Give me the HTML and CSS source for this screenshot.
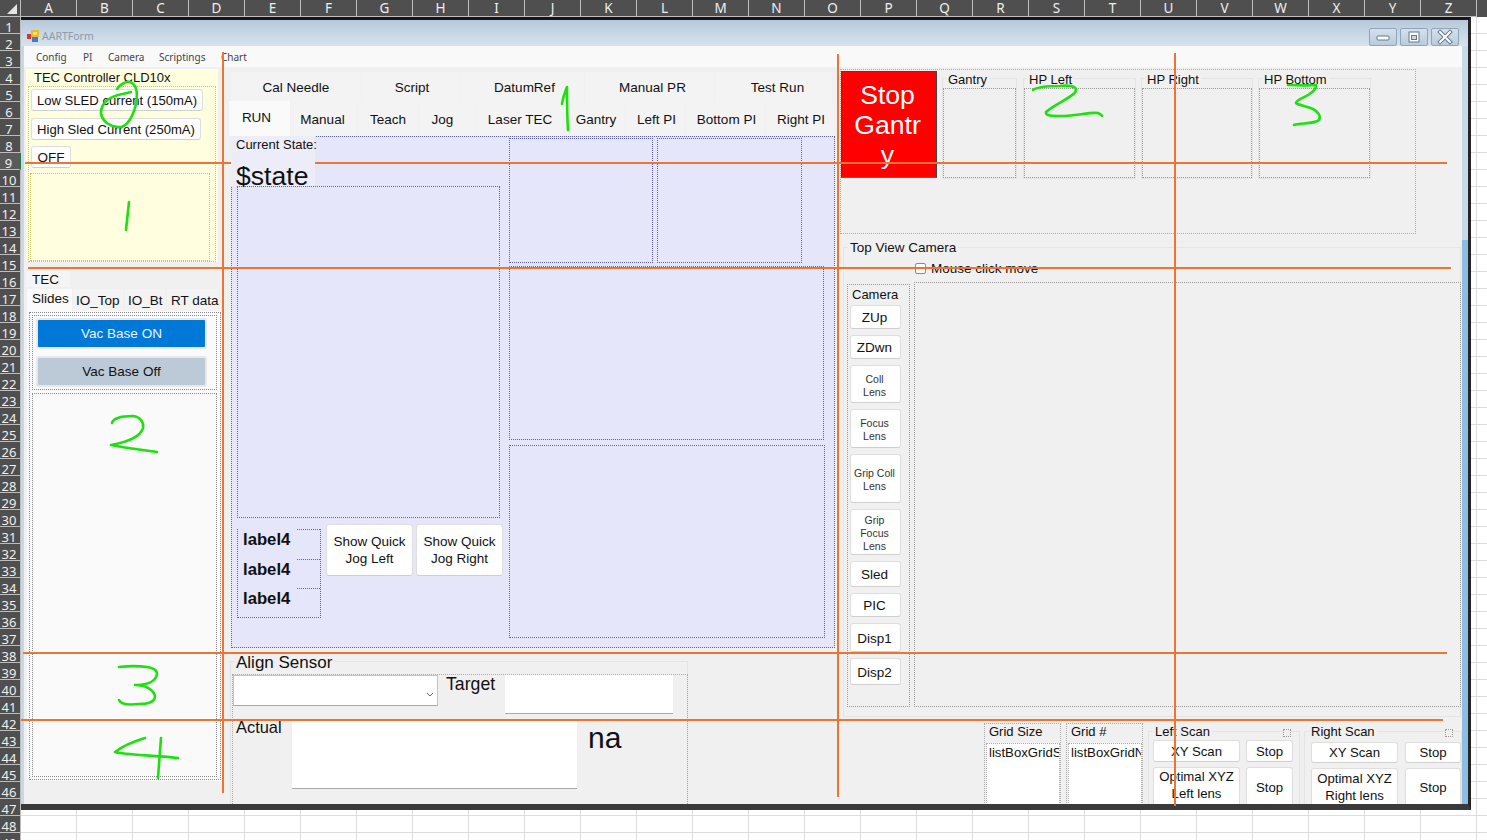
FILE: index.html
```html
<!DOCTYPE html>
<html lang="en">
<head>
<meta charset="utf-8">
<title>AARTForm</title>
<link rel="stylesheet" href="styles.css">
</head>
<body>
<div class="excel">
  <div class="corner"><span class="corner-tri"></span></div>
  <div class="col-heads">
    <div>A</div><div>B</div><div>C</div><div>D</div><div>E</div><div>F</div><div>G</div><div>H</div><div>I</div><div>J</div><div>K</div><div>L</div><div>M</div><div>N</div><div>O</div><div>P</div><div>Q</div><div>R</div><div>S</div><div>T</div><div>U</div><div>V</div><div>W</div><div>X</div><div>Y</div><div>Z</div>
  </div>
  <div class="row-heads">
    <div>1</div><div>2</div><div>3</div><div>4</div><div>5</div><div>6</div><div>7</div><div>8</div><div class="row-active">9</div><div>10</div><div>11</div><div>12</div><div>13</div><div>14</div><div>15</div><div>16</div><div>17</div><div>18</div><div>19</div><div>20</div><div>21</div><div>22</div><div>23</div><div>24</div><div>25</div><div>26</div><div>27</div><div>28</div><div>29</div><div>30</div><div>31</div><div>32</div><div>33</div><div>34</div><div>35</div><div>36</div><div>37</div><div>38</div><div>39</div><div>40</div><div>41</div><div>42</div><div>43</div><div>44</div><div>45</div><div>46</div><div>47</div><div>48</div><div>49</div>
  </div>
  <div class="sheet">
    <div class="window">
      <div class="titlebar">
        <svg class="app-icon" viewBox="0 0 12 12" width="12" height="12">
          <rect x="4" y="0" width="8" height="7" fill="#e9b93a"/>
          <rect x="0" y="4" width="4" height="5" fill="#d8352a"/>
          <rect x="5" y="7" width="6" height="5" fill="#4a78c8"/>
          <rect x="6" y="2" width="4" height="3" fill="#f7de6b"/>
        </svg>
        <span class="app-title">AARTForm</span>
        <div class="win-btns">
          <div class="win-btn"><svg viewBox="0 0 28 18" width="28" height="18"><rect x="8" y="8" width="12" height="4" rx="1" fill="#fff" stroke="#66788c"/></svg></div>
          <div class="win-btn"><svg viewBox="0 0 28 18" width="28" height="18"><rect x="9" y="4" width="10" height="10" fill="#fff" stroke="#66788c"/><rect x="11.5" y="7.5" width="5" height="4" fill="#c9d8e7" stroke="#66788c"/></svg></div>
          <div class="win-btn"><svg viewBox="0 0 28 18" width="28" height="18"><path d="M9 4l10 10M19 4L9 14" stroke="#66788c" stroke-width="4" stroke-linecap="square"/><path d="M9 4l10 10M19 4L9 14" stroke="#fff" stroke-width="2" stroke-linecap="square"/></svg></div>
        </div>
      </div>
      <div class="win-body">
        <div class="frame-l"></div>
        <div class="win-main">
          <div class="menu">
            <span class="m-config">Config</span><span class="m-pi">PI</span><span class="m-camera">Camera</span><span class="m-script">Scriptings</span><span>Chart</span>
          </div>
          <div class="client">

            <div class="col-left">
              <div class="tec-group">
                <div class="tec-title">TEC Controller CLD10x</div>
                <div class="tec-inner">
                  <button class="btn tec-b1">Low SLED current (150mA)</button>
                  <button class="btn tec-b2">High Sled Current (250mA)</button>
                  <button class="btn tec-b3">OFF</button>
                  <div class="tec-box"></div>
                </div>
              </div>
              <div class="tec-tab">TEC</div>
              <div class="slide-tabs">
                <div class="st st-active st1">Slides</div>
                <div class="st st2">IO_Top</div>
                <div class="st st3">IO_Bt</div>
                <div class="st st4">RT data</div>
              </div>
              <div class="slide-panel">
                <div class="slide-outer">
                  <div class="vac-box">
                    <button class="vac vac-on">Vac Base ON</button>
                    <button class="vac vac-off">Vac Base Off</button>
                  </div>
                  <div class="slide-empty"></div>
                </div>
              </div>
            </div>

            <div class="col-center">
              <div class="tabs1">
                <div class="tab">Cal Needle</div>
                <div class="tab">Script</div>
                <div class="tab">DatumRef</div>
                <div class="tab">Manual PR</div>
                <div class="tab">Test Run</div>
              </div>
              <div class="tabs2">
                <div class="tab tab-active">RUN</div>
                <div class="tab">Manual</div>
                <div class="tab">Teach</div>
                <div class="tab">Jog</div>
                <div class="tab">Laser TEC</div>
                <div class="tab">Gantry</div>
                <div class="tab">Left PI</div>
                <div class="tab">Bottom PI</div>
                <div class="tab">Right PI</div>
              </div>
              <div class="run-panel">
                <div class="run-left">
                  <div class="state-head">
                    <div class="state-cap">Current State:</div>
                    <div class="state-val">$state</div>
                  </div>
                  <div class="state-box"></div>
                  <div class="run-bottom">
                    <div class="labels">
                      <div class="lab-row"><span class="lab">label4</span></div>
                      <div class="lab-row"><span class="lab">label4</span></div>
                      <div class="lab-row"><span class="lab">label4</span></div>
                    </div>
                    <button class="btn quick">Show Quick Jog Left</button>
                    <button class="btn quick">Show Quick Jog Right</button>
                  </div>
                </div>
                <div class="run-right">
                  <div class="run-top">
                    <div class="lv-box lv-a"></div>
                    <div class="lv-box lv-b"></div>
                  </div>
                  <div class="lv-box lv-c"></div>
                  <div class="lv-box lv-d"></div>
                </div>
              </div>
              <div class="align gb">
                <div class="gb-title align-title">Align Sensor</div>
                <div class="align-inner">
                  <div class="align-r1">
                    <div class="combo"><svg viewBox="0 0 8 5" width="8" height="5"><path d="M1 1l3 3 3-3" fill="none" stroke="#666"/></svg></div>
                    <div class="target">Target</div>
                    <div class="tbox tbox-target"></div>
                  </div>
                  <div class="align-r2">
                    <div class="actual">Actual</div>
                    <div class="tbox tbox-actual"></div>
                    <div class="na">na</div>
                  </div>
                </div>
              </div>
            </div>

            <div class="col-right">
              <div class="hp-area">
                <button class="stop-gantry">Stop Gantry</button>
                <div class="gb hp hp-g"><div class="gb-title">Gantry</div><div class="hp-in"></div></div>
                <div class="gb hp hp-l"><div class="gb-title">HP Left</div><div class="hp-in"></div></div>
                <div class="gb hp hp-r"><div class="gb-title">HP Right</div><div class="hp-in"></div></div>
                <div class="gb hp hp-b"><div class="gb-title">HP Bottom</div><div class="hp-in"></div></div>
              </div>
              <div class="gb top-view">
                <div class="gb-title">Top View Camera</div>
                <label class="mouse-row"><span class="check"></span>Mouse click move</label>
                <div class="tv-body">
                  <div class="cam-col">
                    <div class="cam-title">Camera</div>
                    <div class="cam-btns">
                      <button class="btn cb h24">ZUp</button>
                      <button class="btn cb h24">ZDwn</button>
                      <button class="btn cb cb-s h38">Coll<br>Lens</button>
                      <button class="btn cb cb-s h39">Focus<br>Lens</button>
                      <button class="btn cb cb-s h49">Grip Coll<br>Lens</button>
                      <button class="btn cb cb-s h46">Grip<br>Focus<br>Lens</button>
                      <button class="btn cb h26">Sled</button>
                      <button class="btn cb h24">PIC</button>
                      <button class="btn cb h29">Disp1</button>
                      <button class="btn cb h27">Disp2</button>
                    </div>
                  </div>
                  <div class="cam-view"></div>
                </div>
              </div>
              <div class="bottom-row">
                <div class="grid-box">
                  <div class="grid-title">Grid Size</div>
                  <div class="listbox">listBoxGridSize</div>
                </div>
                <div class="grid-box grid-box2">
                  <div class="grid-title">Grid #</div>
                  <div class="listbox">listBoxGridNumber</div>
                </div>
                <div class="gb scan scan-l">
                  <div class="gb-title">Left Scan</div>
                  <span class="sq"></span>
                  <div class="scan-grid">
                    <button class="btn sb">XY Scan</button>
                    <button class="btn sb">Stop</button>
                    <button class="btn sb sb-t sb-opt">Optimal XYZ Left lens</button>
                    <button class="btn sb sb-t">Stop</button>
                  </div>
                </div>
                <div class="gb scan scan-r">
                  <div class="gb-title">Right Scan</div>
                  <span class="sq"></span>
                  <div class="scan-grid">
                    <button class="btn sb">XY Scan</button>
                    <button class="btn sb">Stop</button>
                    <button class="btn sb sb-t">Optimal XYZ Right lens</button>
                    <button class="btn sb sb-t">Stop</button>
                  </div>
                </div>
              </div>
            </div>

          </div>
        </div>
        <div class="frame-r"></div>
      </div>
    </div>
  </div>
</div>

<svg class="ink" viewBox="0 0 1487 840" width="1487" height="840" aria-hidden="true">
  <g class="ink-orange">
    <path d="M223 52V793"/>
    <path d="M838 54V797"/>
    <path d="M1175 53V806"/>
    <path d="M25 163H1447"/>
    <path d="M28 268H1451"/>
    <path d="M23 653H1447"/>
    <path d="M21 720H1443"/>
  </g>
  <g class="ink-green">
    <path d="M117 89C120 84 127 81 130 82C136 84 138 92 136 104C133 117 127 126 121 127C112 128 102 122 101 113C101 104 108 98 118 95C123 94 127 93 131 92"/>
    <path d="M129 202C128 212 127 221 126 230"/>
    <path d="M562 104C563 97 565 92 567 87C567 100 567 115 568 130"/>
    <path d="M112 423C113 419 120 416 133 416C141 417 144 423 143 428C141 436 128 442 111 445C125 448 142 450 157 452"/>
    <path d="M119 667C128 666 140 666 147 667C155 668 159 672 156 677C153 683 144 685 135 685C145 685 153 689 155 696C155 702 148 704 139 704C130 705 121 705 119 700"/>
    <path d="M145 738C135 741 123 746 115 752C125 755 150 755 178 758"/>
    <path d="M161 738C160 752 159 765 158 778"/>
    <path d="M1033 90C1037 87 1045 86 1060 86C1068 85 1076 86 1076 90C1076 96 1056 103 1046 112C1045 116 1052 116 1062 116C1075 116 1090 112 1098 113C1100 114 1102 115 1102 116"/>
    <path d="M1288 85C1297 85 1308 86 1316 85C1317 89 1313 92 1308 95C1303 98 1296 100 1296 103C1298 105 1307 106 1313 109C1319 112 1321 117 1319 120C1315 124 1301 123 1294 125"/>
  </g>
</svg>
</body>
</html>
```

FILE: styles.css
```css
* { box-sizing: border-box; }
html, body { margin: 0; padding: 0; height: 100%; overflow: hidden; background: #fff; }
body { font-family: "Liberation Sans", Arial, sans-serif; color: #111; font-size: 13.5px; }
button { font-family: inherit; cursor: default; margin: 0; padding: 0; }

/* ---------- spreadsheet behind the form ---------- */
.excel { display: grid; grid-template-columns: 21px 1fr; grid-template-rows: 17px 1fr; height: 840px; width: 1487px; }
.corner { background: #4f4f4f; border-right: 1px solid #bdbdbd; border-bottom: 1px solid #bdbdbd; display: flex; align-items: flex-end; justify-content: flex-end; padding: 0 3px 2px 0; }
.corner-tri { width: 10px; height: 10px; background: #e4e4e4; clip-path: polygon(100% 0, 100% 100%, 0 100%); }
.col-heads { display: flex; background: #4f4f4f; overflow: hidden; }
.col-heads div { flex: 0 0 56px; height: 17px; border-right: 1px solid #bdbdbd; border-bottom: 1px solid #bdbdbd; color: #efefef; font: 13.5px/16px "Noto Sans", sans-serif; text-align: center; }
.row-heads { background: #4f4f4f; overflow: hidden; }
.row-heads div { height: 17px; border-right: 1px solid #bdbdbd; border-bottom: 1px solid #bdbdbd; color: #efefef; font: 13px/20px "Noto Sans", sans-serif; text-align: center; padding-right: 2px; }
.row-heads .row-active { border-right: 2px solid #1c7f49; background: #5b5b5b; }
.sheet {
  background-color: #fff;
  background-image: linear-gradient(to right, #dcdcdc 1px, transparent 1px), linear-gradient(to bottom, #dcdcdc 1px, transparent 1px);
  background-size: 56px 17px;
  background-position: 55px 16px;
  overflow: hidden;
}

/* ---------- window chrome ---------- */
.window { width: 1450px; height: 793px; border-top: 3px solid #161616; border-right: 3px solid #262626; border-bottom: 6px solid #3a3a3a; display: flex; flex-direction: column; }
.titlebar { height: 26px; flex: none; background: linear-gradient(#b7c9da, #d6e3ee); display: flex; align-items: center; padding-left: 6px; }
.app-icon { margin-top: 6px; }
.app-title { margin: 6px 0 0 3px; font: 10.5px "Noto Sans", sans-serif; color: #8f9ba7; }
.win-btns { margin-left: auto; display: flex; gap: 3px; margin-right: 9px; margin-top: 7px; height: 18px; }
.win-btn { width: 28px; height: 18px; border: 1px solid #8fa5bc; border-radius: 2px; background: linear-gradient(#d5e1ec, #b9cbdc); display: flex; align-items: center; justify-content: center; }
.win-btn svg { flex: none; }
.win-body { flex: 1; display: flex; min-height: 0; }
.frame-l { width: 3px; flex: none; background: #c7d7e6; }
.frame-r { width: 6px; flex: none; background: linear-gradient(#c8d9ea 0, #c8d9ea 194px, #8ebde3 194px); }
.win-main { flex: 1; min-width: 0; display: flex; flex-direction: column; background: #f0f0f0; }
.menu { height: 21px; flex: none; background: #f9f9f9; display: flex; align-items: center; padding-left: 12px; font: 10px "Noto Sans", sans-serif; color: #444; }
.m-config { width: 47px; }
.m-pi { width: 25px; }
.m-camera { width: 51px; }
.m-script { width: 62px; }
.client { flex: 1; min-height: 0; overflow: hidden; display: flex; align-items: flex-start; }

/* ---------- shared widgets ---------- */
.btn { background: #fff; border: 1px solid #dedede; border-bottom-color: #cfcfcf; border-radius: 3px; color: #111; font-size: 13.5px; line-height: 17px; text-align: center; }
.gb { border: 1px solid #e4e4e4; display: flex; flex-direction: column; }
.gb-title { width: fit-content; background: #f0f0f0; margin: -8px 0 0 4px; padding: 0 2px; font-size: 13.5px; line-height: 16px; flex: none; }

/* ---------- left column ---------- */
.col-left { width: 197px; margin-left: 2px; margin-top: 2px; flex: none; }
.tec-group { width: 192px; height: 193px; background: #ffffe0; padding: 0 2px; }
.tec-title { height: 17px; padding: 1px 0 0 6px; font-size: 13px; line-height: 16px; }
.tec-inner { width: 188px; height: 176px; border: 1px dotted #c6c65c; padding: 2px 2px 0; display: flex; flex-direction: column; align-items: flex-start; }
.tec-b1, .tec-b2 { white-space: nowrap; font-size: 13.1px; padding-top: 1px; }
.tec-b1 { width: 172px; height: 22px; }
.tec-b2 { width: 170px; height: 22px; margin-top: 7px; }
.tec-b3 { width: 40px; height: 22px; margin-top: 6px; padding-top: 1px; }
.tec-box { width: 180px; height: 88px; margin: 5px 0 0 -1px; border: 1px dotted #c6c65c; }
.tec-tab { width: 44px; height: 16px; margin-top: 9px; background: #f5f5f5; padding-left: 6px; line-height: 18px; }
.slide-tabs { height: 22px; margin-top: 2px; margin-left: 1px; display: flex; }
.st { background: #f3f3f3; line-height: 24px; white-space: nowrap; }
.st-active { background: #fafafa; line-height: 20px; }
.st1 { width: 45px; padding-left: 5px; margin-right: 1px; }
.st2 { width: 50px; padding-left: 3px; margin-right: 2px; }
.st3 { width: 40px; padding-left: 3px; margin-right: 2px; }
.st4 { width: 51px; padding-left: 4px; }
.slide-panel { width: 195px; height: 470px; margin-left: 1px; background: #fafafa; padding: 1px 0 0 2px; }
.slide-outer { width: 192px; height: 468px; border: 1px dotted #888; padding: 2px; }
.vac-box { width: 185px; height: 75px; border: 1px dotted #888; padding: 2px 3px; display: flex; flex-direction: column; gap: 7px; }
.vac { width: 171px; height: 31px; border: 2px solid #e8e8e8; border-radius: 3px; font-size: 13.5px; }
.vac-on { background: #0078d7; color: #e9f4ff; }
.vac-off { background: #bccad8; color: #111; }
.slide-empty { width: 185px; height: 384px; margin-top: 3px; border: 1px dotted #888; }

/* ---------- centre column ---------- */
.col-center { width: 606px; margin-left: 6px; flex: none; }
.tab { background: #f3f3f3; text-align: center; }
.tabs1 { margin: 5px 0 0 2px; height: 30px; display: grid; grid-template-columns: 130px 98px 123px 129px 117px; column-gap: 1px; }
.tabs1 .tab { line-height: 31px; }
.tabs1 .tab:nth-child(2) { padding-left: 2px; }
.tabs1 .tab:nth-child(3) { padding-left: 4px; }
.tabs1 .tab:nth-child(4) { padding-left: 6px; }
.tabs1 .tab:nth-child(5) { padding-left: 8px; }
.tabs2 { margin-top: 1px; height: 33px; display: grid; grid-template-columns: 61px 66px 60px 57px 86px 61px 59px 79px 67px; column-gap: 1px; }
.tabs2 .tab { line-height: 33px; }
.tabs2 .tab-active { background: #fafafa; margin-top: -2px; line-height: 34px; padding-right: 6px; }
.tabs2 .tab:nth-child(2) { padding-right: 3px; }
.tabs2 .tab:nth-child(4) { padding-right: 10px; }
.tabs2 .tab:nth-child(6) { padding-left: 3px; }
.tabs2 .tab:nth-child(7) { padding-left: 2px; }
.tabs2 .tab:nth-child(8) { padding-left: 2px; }
.tabs2 .tab:nth-child(9) { padding-left: 3px; }
.run-panel { margin-left: 2px; width: 604px; height: 512px; background: #e6e6fa; border: 1px dotted #5f5fb0; display: flex; gap: 6px; }
.run-left { width: 271px; flex: none; }
.state-head { height: 50px; width: 84px; margin: -1px 0 0 -1px; padding: 1px 0 0 5px; background: #ededfa; position: relative; z-index: 1; white-space: nowrap; }
.state-cap { font-size: 13px; line-height: 16px; }
.state-val { font-size: 26.6px; line-height: 32px; margin-top: 7px; }
.state-box { width: 263px; height: 332px; margin: 0 0 0 5px; border: 1px dotted #5f5fb0; }
.run-bottom { display: flex; align-items: flex-start; margin-top: 6px; }
.labels { width: 84px; height: 89px; margin: 5px 5px 0 5px; border-left: 1px dotted #5f5fb0; border-right: 1px dotted #5f5fb0; border-bottom: 1px dotted #5f5fb0; flex: none; }
.lab-row { height: 29.5px; border-top: 1px dotted #5f5fb0; }
.lab { display: block; width: 58px; height: 22px; margin-top: -1px; padding-left: 5px; background: #e6e6fa; font-size: 16.7px; font-weight: 700; line-height: 22px; }
.quick { width: 87px; height: 52px; margin-right: 3px; flex: none; padding: 0 3px; }
.run-right { display: flex; flex-direction: column; padding-top: 1px; }
.run-top { display: flex; gap: 4px; }
.lv-box { border: 1px dotted #5f5fb0; }
.lv-a { width: 144px; height: 125px; }
.lv-b { width: 145px; height: 125px; }
.lv-c { width: 315px; height: 174px; margin-top: 3px; }
.lv-d { width: 316px; height: 193px; margin-top: 5px; }

.align { width: 458px; height: 160px; margin: 13px 0 0 1px; }
.align-title { font-size: 17px; margin-top: -8px; padding: 0 1px; line-height: 17px; margin-left: 4px; }
.align-inner { width: 456px; height: 140px; margin: 3px 0 0 1px; border: 1px dotted #aaa; }
.align-r1 { display: flex; align-items: flex-start; height: 40px; }
.combo { width: 205px; height: 31px; background: #fff; border: 1px solid #c4c4c4; border-bottom-color: #a8a8a8; display: flex; align-items: center; justify-content: flex-end; padding: 7px 3px 0 0; }
.target { width: 67px; padding: 1px 0 0 8px; font-size: 17.7px; line-height: 17px; }
.tbox { background: #fff; border-bottom: 1px solid #aaa; }
.tbox-target { width: 168px; height: 39px; }
.align-r2 { display: flex; align-items: flex-start; margin-top: 6px; }
.actual { width: 59px; margin-top: -2px; padding-left: 3px; font-size: 16.4px; line-height: 16px; flex: none; }
.tbox-actual { width: 285px; height: 68px; }
.na { margin-left: 11px; font-size: 30px; line-height: 34px; }

/* ---------- right column ---------- */
.col-right { width: 621px; margin-left: 5px; margin-top: 2px; flex: none; }
.hp-area { width: 576px; height: 165px; border: 1px dotted #aaa; padding-top: 1px; display: flex; align-items: flex-start; }
.stop-gantry { width: 96px; height: 107px; background: #fe0000; color: #fff; border: 1px solid #444; border-bottom-color: #666; font-size: 26.6px; line-height: 30px; padding: 0 14px 0 11px; overflow-wrap: anywhere; flex: none; }
.hp { height: 101px; margin-top: 7px; flex: none; }
.hp .gb-title { font-size: 13px; margin: -7px 0 0 3px; }
.hp-g { width: 75px; margin-left: 5px; }
.hp-l { width: 113px; margin-left: 6px; }
.hp-r { width: 112px; margin-left: 5px; }
.hp-b { width: 113px; margin-left: 5px; }
.hp-in { flex: 1; border: 1px dotted #999; }
.top-view { width: 618px; height: 470px; margin: 13px 0 0 3px; }
.mouse-row { display: flex; align-items: center; height: 14px; margin: 5px 0 0 71px; }
.check { width: 11px; height: 11px; margin-right: 5px; border: 1px solid #8a8a8a; border-radius: 2px; background: #fff; }
.tv-body { display: flex; align-items: flex-end; gap: 4px; margin: 7px 0 0 3px; height: 425px; }
.cam-col { width: 63px; height: 423px; border: 1px dotted #999; flex: none; }
.cam-title { margin: 2px 0 0 4px; font-size: 13px; line-height: 16px; }
.cam-btns { display: flex; flex-direction: column; gap: 6px; margin: 2px 0 0 2px; }
.cb { width: 51px; padding: 1px 2px 0 0; }
.cb-s { font-size: 10.5px; line-height: 13px; color: #333; padding-top: 3px; }
.h24 { height: 24px; }
.h26 { height: 26px; }
.h27 { height: 27px; }
.h29 { height: 29px; }
.h38 { height: 38px; }
.h39 { height: 39px; }
.h46 { height: 46px; }
.h49 { height: 49px; }
.cam-view { width: 547px; height: 425px; border: 1px dotted #999; flex: none; }

.bottom-row { display: flex; align-items: flex-start; margin: 6px 0 0 144px; height: 100px; }
.grid-box { width: 77px; height: 100px; border: 1px dotted #aaa; padding: 0 1px; flex: none; }
.grid-box2 { margin-left: 5px; }
.grid-title { height: 19px; padding-left: 3px; font-size: 13px; line-height: 16px; }
.listbox { width: 74px; height: 80px; background: #fff; border: 1px dotted #aaa; padding: 1px 2px; font-size: 13.2px; line-height: 16px; overflow: hidden; white-space: nowrap; }
.scan { height: 100px; margin-top: 8px; position: relative; flex: none; }
.scan-l { width: 152px; margin-left: 5px; }
.scan-r { width: 158px; margin-left: 4px; }
.scan .gb-title { margin-left: 4px; font-size: 13px; }
.sq { position: absolute; top: -3px; right: 8px; width: 8px; height: 8px; border: 1px dotted #999; background: #f0f0f0; }
.scan-grid { display: grid; grid-template-columns: 87px 47px; grid-auto-rows: auto; column-gap: 6px; row-gap: 5px; margin: 0 0 0 4px; }
.scan-r .scan-grid { grid-template-columns: 87px 56px; column-gap: 7px; margin: 2px 0 0 6px; row-gap: 5px; }
.sb { height: 22px; font-size: 13.2px; }
.sb-t { height: 40px; padding: 0 2px; }
.sb-opt { padding-bottom: 4px; }
.scan-r .sb { height: 21px; }
.scan-r .sb-t { height: 40px; padding-bottom: 2px; }

/* ---------- hand-drawn annotations on top ---------- */
.ink { position: absolute; left: 0; top: 0; pointer-events: none; }
.ink-orange path { fill: none; stroke: #ed7433; stroke-width: 2; }
.ink-green path { fill: none; stroke: #1fe00f; stroke-width: 2.6; stroke-linecap: round; stroke-linejoin: round; }
```
